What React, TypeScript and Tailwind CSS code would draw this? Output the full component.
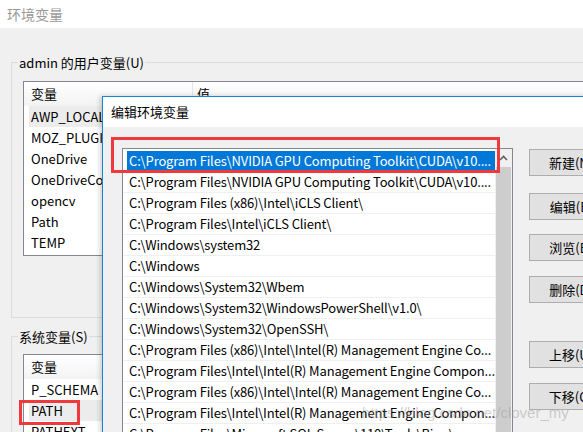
import React from "react";

const userVars = ["AWP_LOCAL_LOCALAPPDATA", "MOZ_PLUGIN_PATH", "OneDrive", "OneDriveConsumer", "opencv", "Path", "TEMP"];
const systemVars = ["P_SCHEMA", "PATH", "PATHEXT"];

const pathRows = [
  "C:\\Program Files\\NVIDIA GPU Computing Toolkit\\CUDA\\v10....",
  "C:\\Program Files\\NVIDIA GPU Computing Toolkit\\CUDA\\v10....",
  "C:\\Program Files (x86)\\Intel\\iCLS Client\\",
  "C:\\Program Files\\Intel\\iCLS Client\\",
  "C:\\Windows\\system32",
  "C:\\Windows",
  "C:\\Windows\\System32\\Wbem",
  "C:\\Windows\\System32\\WindowsPowerShell\\v1.0\\",
  "C:\\Windows\\System32\\OpenSSH\\",
  "C:\\Program Files (x86)\\Intel\\Intel(R) Management Engine Co...",
  "C:\\Program Files\\Intel\\Intel(R) Management Engine Compon...",
  "C:\\Program Files (x86)\\Intel\\Intel(R) Management Engine Co...",
  "C:\\Program Files\\Intel\\Intel(R) Management Engine Compon...",
  "C:\\Program Files\\Microsoft SQL Server\\110\\Tools\\Binn\\",
];

const buttons = [
  { label: "新建(N)", mt: "mt-[1px]" },
  { label: "编辑(E)", mt: "mt-[17px]" },
  { label: "浏览(B)", mt: "mt-[14px]" },
  { label: "删除(D)", mt: "mt-[15px]" },
  { label: "上移(U)", mt: "mt-[38px]" },
  { label: "下移(O)", mt: "mt-[15px]" },
];

function VarList({ items, highlight, height }: { items: string[]; highlight: number; height: string }) {
  return (
    <div className={`w-[600px] ${height} border border-[#828790] bg-white overflow-hidden`}>
      <div className="flex h-[24px] bg-gradient-to-b from-white to-[#f3f3f3]">
        <div className="w-[169px] pl-[7px] flex items-center border-r border-[#e5e5e5]">变量</div>
        <div className="pl-[4px] flex items-center">值</div>
      </div>
      {items.map((name, i) => (
        <div
          key={name}
          className={`h-[21px] ml-[5px] pl-[2px] flex items-center whitespace-nowrap ${
            i === highlight ? "bg-[#ececec]" : ""
          }`}
        >
          {name}
        </div>
      ))}
    </div>
  );
}

export default function App() {
  return (
    <div className="relative w-[583px] h-[432px] overflow-hidden bg-[#f0f0f0] text-[13px] text-black font-['Noto_Sans_CJK_SC',sans-serif]">
      {/* parent window */}
      <div className="h-[28px] bg-white pl-[7px] flex items-center text-[14px] text-[#999999]">环境变量</div>
      <div className="pl-[11px] pt-[26px]">
        <fieldset className="w-[620px] border border-[#dcdcdc] pl-[11px] pt-[10px] pb-[61px]">
          <legend className="ml-[-5px] px-[1px] leading-[17px]">admin 的用户变量(U)</legend>
          <VarList items={userVars} highlight={0} height="h-[175px]" />
        </fieldset>
        <fieldset className="mt-[10px] w-[620px] border border-[#dcdcdc] pl-[11px] pt-[9px] pb-[20px]">
          <legend className="ml-[-5px] px-[1px] leading-[17px]">系统变量(S)</legend>
          <VarList items={systemVars} highlight={1} height="h-[120px]" />
        </fieldset>
      </div>

      {/* edit dialog */}
      <div className="absolute left-[102px] top-[96px] w-[520px] h-[360px] border border-[#1883d7] bg-[#f0f0f0] shadow-[-2px_0_5px_rgba(0,0,0,0.18)]">
        <div className="h-[30px] bg-white pl-[8px] flex items-center">编辑环境变量</div>
        <div className="flex pl-[19px] pt-[21px] gap-[16px]">
          <div className="w-[391px] h-[320px] border border-[#828790] bg-white flex">
            <div className="flex-1 pt-[2px] overflow-hidden tracking-[-0.15px]">
              {pathRows.map((row, i) => (
                <div key={i} className="h-[21px] border-b border-[#f0f0f0] whitespace-nowrap">
                  {i === 0 ? (
                    <div className="h-[20px] ml-[4px] pl-[2px] bg-[#0078d7] text-white flex items-center">{row}</div>
                  ) : (
                    <div className="h-[20px] pl-[6px] flex items-center">{row}</div>
                  )}
                </div>
              ))}
            </div>
            <div className="w-[17px] bg-[#f0f0f0] flex flex-col px-[1px]">
              <div className="h-[18px] flex items-center justify-center">
                <svg width="9" height="6" viewBox="0 0 9 6">
                  <path d="M1 5 L4.5 1.5 L8 5" fill="none" stroke="#606060" strokeWidth="1.6" />
                </svg>
              </div>
              <div className="flex-1 bg-[#cdcdcd]" />
            </div>
          </div>
          <div className="flex flex-col">
            {buttons.map((b) => (
              <div
                key={b.label}
                className={`${b.mt} w-[84px] h-[27px] border border-[#adadad] bg-[#e1e1e1] flex items-center justify-center`}
              >
                {b.label}
              </div>
            ))}
          </div>
        </div>
      </div>

      {/* annotations */}
      <div className="absolute left-[111px] top-[137px] w-[389px] h-[36px] border-[3px] border-[#f0393c]" />
      <div className="absolute left-[19px] top-[400px] w-[61px] h-[25px] border-[3px] border-[#f0393c]" />
      <div className="absolute left-[362px] top-[402px] text-[15px] font-['Liberation_Sans',sans-serif] text-[rgba(150,150,150,0.45)] whitespace-nowrap">
        https://blog.csdn.net/clover_my
      </div>
    </div>
  );
}
